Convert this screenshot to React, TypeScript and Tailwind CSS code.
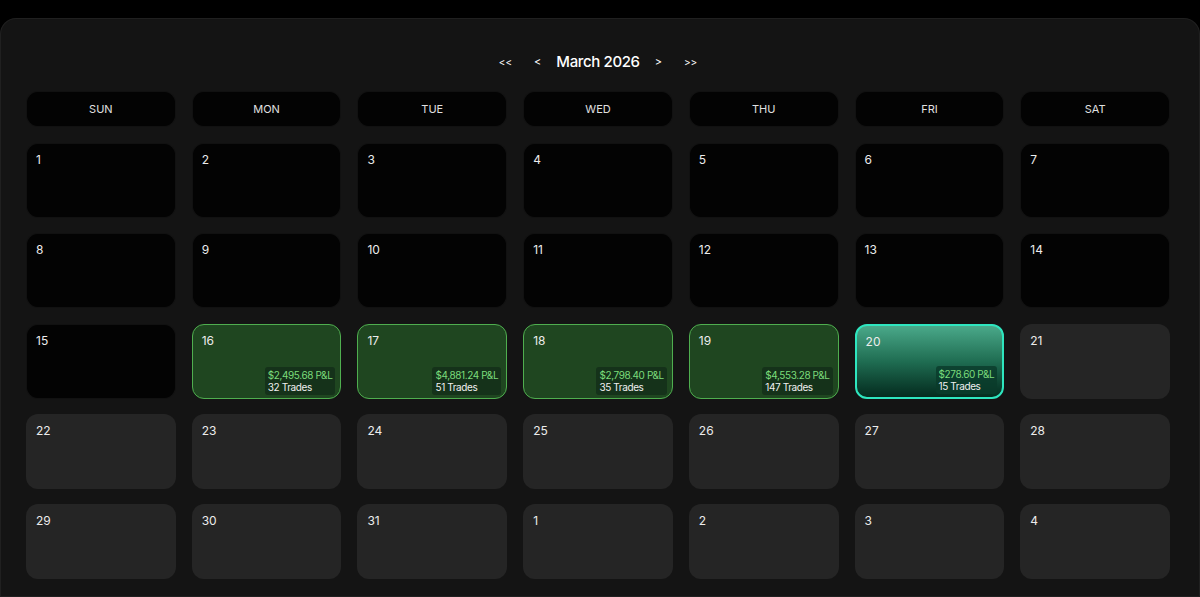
const weekdays = ["SUN", "MON", "TUE", "WED", "THU", "FRI", "SAT"];

type Day = {
  n: number;
  kind: "past" | "win" | "today" | "future";
  pnl?: string;
  trades?: number;
};

const days: Day[] = [
  ...[1, 2, 3, 4, 5, 6, 7, 8, 9, 10, 11, 12, 13, 14, 15].map((n) => ({ n, kind: "past" as const })),
  { n: 16, kind: "win", pnl: "$2,495.68", trades: 32 },
  { n: 17, kind: "win", pnl: "$4,881.24", trades: 51 },
  { n: 18, kind: "win", pnl: "$2,798.40", trades: 35 },
  { n: 19, kind: "win", pnl: "$4,553.28", trades: 147 },
  { n: 20, kind: "today", pnl: "$278.60", trades: 15 },
  ...[21, 22, 23, 24, 25, 26, 27, 28, 29, 30, 31, 1, 2, 3, 4].map((n) => ({ n, kind: "future" as const }))
];

const cellStyles = {
  past: "bg-[#030303] border border-white/[0.06]",
  win: "bg-[#1f4620] border border-[#4fae4f]",
  today: "bg-gradient-to-b from-[#4aa98a] via-[#1f6d52] to-[#052c1f] border-2 border-[#2ee6bf]",
  future: "bg-[#252525] border border-transparent"
};

function DayCell({ day }: { day: Day }) {
  return (
    <div className={["relative h-[75px] rounded-xl pl-[9px] pt-[9px]", cellStyles[day.kind]].join(" ")}>
      <div className="text-[12px] leading-[14px] text-[#ececec]">{day.n}</div>
      {day.pnl ? (
        <div
          className={[
            "absolute bottom-[3px] right-[5px] rounded-[3px] px-[3px] py-[2px] text-[10px] leading-[12px] tracking-[-0.4px]",
            day.kind === "today" ? "bg-[#0a3b2a]/80" : "bg-[#15321a]"
          ].join(" ")}
        >
          <div className="text-[#7bdc7b]">{day.pnl} P&amp;L</div>
          <div className="text-[#f0f0f0]">{day.trades} Trades</div>
        </div>
      ) : null}
    </div>
  );
}

export default function App() {
  return (
    <div
      className="min-h-screen bg-black pt-[18px]"
      style={{ fontFamily: "Inter, 'Noto Sans', sans-serif" }}
    >
      <div className="min-h-[579px] rounded-t-2xl border border-white/[0.05] bg-[#141414] pl-[25px] pr-[29px] pt-[33px]">
        <div className="flex h-[20px] items-center justify-center text-white">
          <button className="mr-[22px] text-[10px] leading-none">&lt;&lt;</button>
          <button className="mr-[15px] text-[11px] leading-none">&lt;</button>
          <h1 className="text-[15px] font-medium leading-[20px] tracking-tight">March 2026</h1>
          <button className="ml-[15px] text-[11px] leading-none">&gt;</button>
          <button className="ml-[22px] text-[10px] leading-none">&gt;&gt;</button>
        </div>

        <div className="mt-[19px] grid grid-cols-7 gap-x-[16px]">
          {weekdays.map((w) => (
            <div
              key={w}
              className="flex h-[36px] items-center justify-center rounded-xl border border-white/[0.06] bg-[#030303] text-[11px] text-[#e0e0e0]"
            >
              {w}
            </div>
          ))}
        </div>

        <div className="mt-[16px] grid grid-cols-7 gap-x-[16px] gap-y-[15.3px]">
          {days.map((d, i) => (
            <DayCell key={i} day={d} />
          ))}
        </div>
      </div>
    </div>
  );
}
